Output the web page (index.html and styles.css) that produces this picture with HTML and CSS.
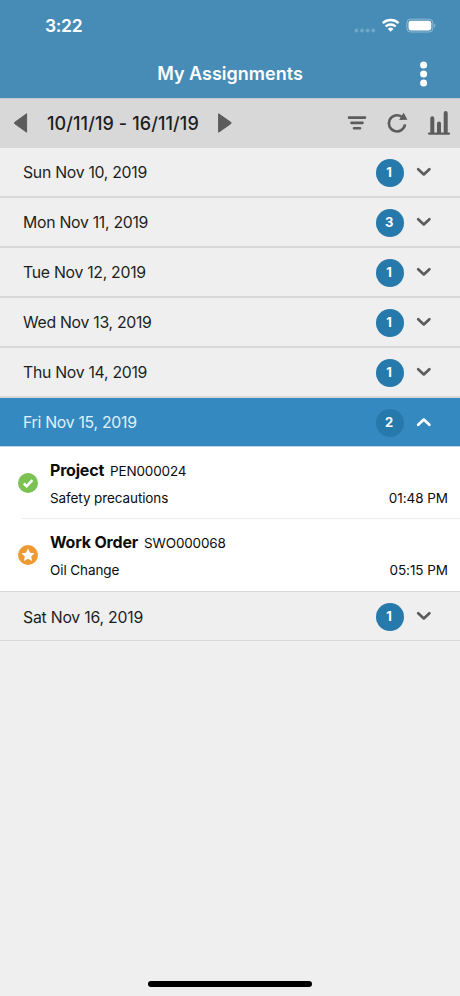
FILE: index.html
```
<!DOCTYPE html>
<html lang="en">
<head>
  <meta charset="UTF-8">
  <meta name="viewport" content="width=device-width, initial-scale=1.0">
  <title>My Assignments</title>
  <link rel="stylesheet" href="styles.css">
</head>
<body>

  <svg width="0" height="0" class="defs">
    <symbol id="chevron" viewBox="0 0 16 10">
      <path d="M2.2 2.2l5.6 5.2 5.6-5.2" fill="none" stroke="currentColor" stroke-width="2.7" stroke-linecap="round" stroke-linejoin="round"/>
    </symbol>
  </svg>

  <header>
    <div class="status">
      <span class="clock">3:22</span>
      <svg class="status-icons" width="84" height="16" viewBox="0 0 84 16">
        <g fill="#fff" opacity=".22">
          <circle cx="4.4" cy="12.4" r="2"/><circle cx="10" cy="12.4" r="2"/><circle cx="15.6" cy="12.4" r="2"/><circle cx="21.2" cy="12.4" r="2"/>
        </g>
        <g fill="none" stroke="#fff" stroke-width="2.4">
          <path d="M30.7 5.2a11.6 11.6 0 0 1 15.9 0"/>
          <path d="M33.6 8.5a7.3 7.3 0 0 1 10.1 0"/>
        </g>
        <path d="M38.65 13.8l-2.8-2.9a4 4 0 0 1 5.6 0z" fill="#fff"/>
        <rect x="54.9" y="1.2" width="26" height="12.8" rx="3.8" fill="none" stroke="#fff" opacity=".4"/>
        <rect x="56.5" y="2.8" width="22.8" height="9.6" rx="2.4" fill="#fff"/>
        <path d="M82.2 5.4c1.6.6 1.6 3.6 0 4.2z" fill="#fff" opacity=".4"/>
      </svg>
    </div>
    <div class="title-bar">
      <h1>My Assignments</h1>
      <svg class="more" width="8" height="26" viewBox="0 0 8 26" fill="#fff">
        <circle cx="3.6" cy="4.1" r="3.5"/><circle cx="3.6" cy="13" r="3.5"/><circle cx="3.6" cy="21.9" r="3.5"/>
      </svg>
    </div>
  </header>

  <div class="toolbar">
    <svg width="14" height="20" viewBox="0 0 14 20"><path d="M12.6 .8v18.4L.8 10.7q-.8-.7 0-1.4z" stroke="currentColor" stroke-linejoin="round" fill="currentColor"/></svg>
    <span class="range">10/11/19 - 16/11/19</span>
    <svg width="14" height="20" viewBox="0 0 14 20"><path d="M.6 .8v18.4l12.2-8.5q.8-.7 0-1.4z" stroke="currentColor" stroke-linejoin="round" fill="currentColor"/></svg>
    <div class="tools">
      <svg width="20" height="24" viewBox="0 0 20 24" stroke="currentColor" stroke-width="2.6" stroke-linecap="round">
        <path d="M2 6.6h16M4.5 11.9h11M7 17.2h6"/>
      </svg>
      <svg width="22" height="24" viewBox="0 0 22 24">
        <path d="M15.8 5.8A8.1 8.1 0 1 0 19 13.4" fill="none" stroke="currentColor" stroke-width="2.6"/>
        <path d="M17.6 1.8l3.9 6.9-8.4.2z" fill="currentColor"/>
      </svg>
      <svg width="24" height="26" viewBox="0 0 24 26" fill="none" stroke="currentColor" stroke-linecap="round">
        <path d="M2 23.6h20" stroke-width="2.2"/>
        <path d="M5.3 8.2V22M12 13.4V22M18.7 3.1V22" stroke-width="4"/>
      </svg>
    </div>
  </div>

  <main>
    <div class="day"><span>Sun Nov 10, 2019</span><b class="badge">1</b><svg class="chevron"><use href="#chevron"/></svg></div>
    <div class="day"><span>Mon Nov 11, 2019</span><b class="badge">3</b><svg class="chevron"><use href="#chevron"/></svg></div>
    <div class="day"><span>Tue Nov 12, 2019</span><b class="badge">1</b><svg class="chevron"><use href="#chevron"/></svg></div>
    <div class="day"><span>Wed Nov 13, 2019</span><b class="badge">1</b><svg class="chevron"><use href="#chevron"/></svg></div>
    <div class="day"><span>Thu Nov 14, 2019</span><b class="badge">1</b><svg class="chevron"><use href="#chevron"/></svg></div>
    <div class="day open"><span>Fri Nov 15, 2019</span><b class="badge">2</b><svg class="chevron"><use href="#chevron"/></svg></div>

    <ul class="jobs">
      <li>
        <svg width="20" height="20" viewBox="0 0 20 20">
          <circle cx="10" cy="10" r="10" fill="#7cc253"/>
          <path d="M5.8 10.5l2.9 2.7 5.7-6" fill="none" stroke="#fff" stroke-width="2.5"/>
        </svg>
        <div class="job">
          <div class="heading"><strong>Project</strong><span class="code">PEN000024</span></div>
          <div class="detail"><span>Safety precautions</span><time>01:48 PM</time></div>
        </div>
      </li>
      <li>
        <svg width="20" height="20" viewBox="0 0 20 20">
          <circle cx="10" cy="10" r="10" fill="#ee9a33"/>
          <path d="M10 3.4l2 4.3 4.6.5-3.4 3.2.9 4.7L10 13.8l-4.1 2.3.9-4.7-3.4-3.2 4.6-.5z" fill="#fff"/>
        </svg>
        <div class="job">
          <div class="heading"><strong>Work Order</strong><span class="code">SWO000068</span></div>
          <div class="detail"><span>Oil Change</span><time>05:15 PM</time></div>
        </div>
      </li>
    </ul>

    <div class="day last"><span>Sat Nov 16, 2019</span><b class="badge">1</b><svg class="chevron"><use href="#chevron"/></svg></div>
  </main>

  <div class="home"></div>

</body>
</html>
```
FILE: styles.css
```
* {
  box-sizing: border-box;
}
html, body {
  height: 100%;
}
body {
  margin: 0;
  display: flex;
  flex-direction: column;
  background: #efefef;
  color: #1e1e1e;
  font-family: Inter, "Liberation Sans", sans-serif;
}
svg {
  display: block;
  flex: none;
}
.defs {
  position: absolute;
}

header {
  height: 98px;
  background: #468cb7;
  color: #fff;
}
.status {
  height: 50px;
  padding: 1px 24px 0 45px;
  display: flex;
  align-items: center;
  justify-content: space-between;
}
.clock {
  font-size: 17.5px;
  font-weight: 600;
  letter-spacing: -0.3px;
}
.title-bar {
  height: 48px;
  padding: 0 32px 1px 0;
  display: grid;
  grid-template-columns: 1fr auto 1fr;
  align-items: center;
}
h1 {
  grid-column: 2;
  margin: 0 -32px 0 0;
  font-size: 18px;
  font-weight: 600;
}
.more {
  justify-self: end;
}

.toolbar {
  height: 50px;
  padding: 0 9px 2px 14px;
  display: flex;
  align-items: center;
  background: #d8d8d8;
  border-top: 1px solid #c4c8ca;
  color: #5c5c5c;
}
.range {
  width: 152px;
  margin: 0 19px;
  padding-top: 1px;
  color: #1e1e1e;
  font-size: 18px;
  font-weight: 500;
  letter-spacing: 0.1px;
  white-space: nowrap;
}
.tools {
  margin-left: auto;
  display: flex;
  align-items: center;
  gap: 19px;
}

.day {
  height: 50px;
  padding: 0 28px 0 23px;
  display: flex;
  align-items: center;
  border-bottom: 2px solid #d8d8d8;
  font-size: 15.8px;
  letter-spacing: -0.28px;
}
.badge {
  width: 28px;
  height: 28px;
  margin: 2px 12px 0 auto;
  padding: 0 2px 2px 0;
  display: grid;
  place-content: center;
  border-radius: 50%;
  background: #2679ab;
  color: #fff;
  font-size: 13px;
  font-weight: 700;
}
.chevron {
  width: 16px;
  height: 10px;
  color: #5c5c5c;
}
.open {
  height: 49px;
  background: #348ac0;
  border-bottom: 1px solid #bdd7e8;
  color: #e1f0fa;
}
.open .chevron {
  color: #fff;
  transform: scaleY(-1);
}
.last {
  height: 50px;
  border-top: 1px solid #d8d8d8;
  border-bottom-width: 1px;
  letter-spacing: -0.22px;
}
.last span {
  padding-top: 2px;
}

.jobs {
  height: 144px;
  margin: 0;
  padding: 0;
  list-style: none;
  background: #fff;
  color: #0c0c0c;
}
.jobs li {
  height: 72px;
  margin-left: 18px;
  display: flex;
  align-items: center;
  gap: 12px;
  font-size: 13.5px;
  /* separator starts just past the icon edge */
  background: linear-gradient(#ececec, #ececec) 4px 100% / 100% 1px no-repeat;
}
.jobs li:last-child {
  background: none;
}
.job {
  flex: 1;
  padding-right: 12px;
  line-height: 28px;
}
.heading {
  padding-top: 2px;
  line-height: 26px;
}
.job strong {
  margin-right: 6px;
  font-size: 16px;
  letter-spacing: -0.2px;
}
.code {
  letter-spacing: -0.15px;
}
.detail {
  display: flex;
  justify-content: space-between;
  letter-spacing: -0.1px;
}
.detail time {
  letter-spacing: -0.05px;
}

.home {
  width: 164px;
  height: 6px;
  margin: auto auto 9px;
  border-radius: 3px;
  background: #000;
}
```
